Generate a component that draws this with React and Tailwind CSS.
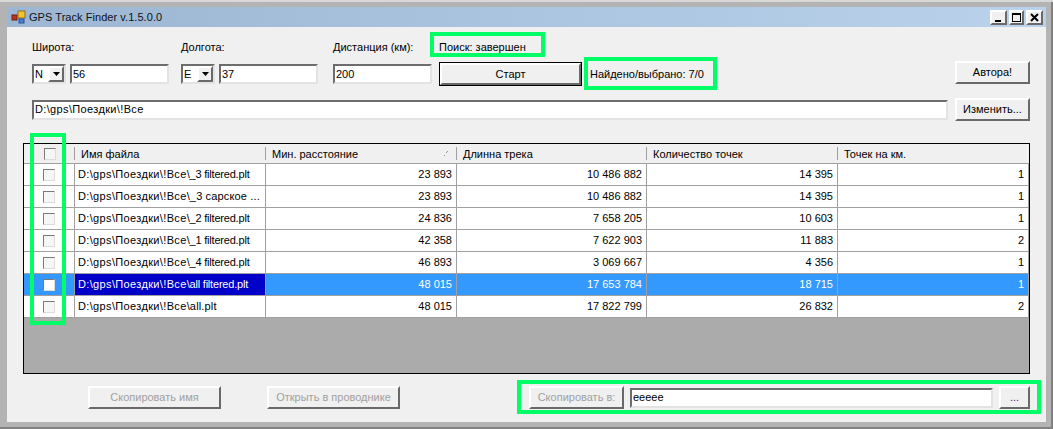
const raised = "border-2 border-t-white border-l-white border-b-[#696969] border-r-[#696969] bg-[#f0f0f0]";
const sunken = "border-2 border-t-[#6d6d6d] border-l-[#6d6d6d] border-b-[#e3e3e3] border-r-[#e3e3e3] bg-white";
const cols = "grid grid-cols-[51px_191px_191px_190px_191px_191px]";

function Field({ className, children }) {
  return <div className={`${sunken} h-[20px] flex items-center pl-[1px] leading-none overflow-hidden ${className}`}>{children}</div>;
}

function Combo({ value }) {
  return (
    <div className={`${sunken} w-[34px] h-[20px] flex items-center justify-between pl-[1px]`}>
      <span>{value}</span>
      <span className={`${raised} w-[16px] h-[16px] flex items-center justify-center`}>
        <svg width="7" height="4" viewBox="0 0 7 4"><path d="M0 0h7L3.5 4z" fill="#000" /></svg>
      </span>
    </div>
  );
}

function Btn({ className, disabled, children }) {
  return (
    <div className={`${raised} h-[23px] flex items-center justify-center ${disabled ? "text-[#a0a0a0]" : "text-black"} ${className}`}>
      {children}
    </div>
  );
}

function Check({ selected }) {
  return (
    <div className={`w-[12px] h-[12px] border border-t-[#7a7a7a] border-l-[#7a7a7a] border-b-[#dcdcdc] border-r-[#dcdcdc] ${selected ? "bg-white" : "bg-[#f6f6f6]"}`} />
  );
}

const base = "D:\\gps\\Поездки\\!Все";
const rows = [
  ["\\_3 filtered.plt", "23 893", "10 486 882", "14 395", "1"],
  ["\\_3 сарское ...", "23 893", "10 486 882", "14 395", "1"],
  ["\\_2 filtered.plt", "24 836", "7 658 205", "10 603", "1"],
  ["\\_1 filtered.plt", "42 358", "7 622 903", "11 883", "2"],
  ["\\_4 filtered.plt", "46 893", "3 069 667", "4 356", "1"],
  ["\\all filtered.plt", "48 015", "17 653 784", "18 715", "1", true],
  ["\\all.plt", "48 015", "17 822 799", "26 832", "2"],
];

const headers = ["Имя файла", "Мин. расстояние", "Длинна трека", "Количество точек", "Точек на км."];

function Row({ r }) {
  const sel = r[5];
  const cell = "border-r border-[#a0a0a0] h-[21px] flex items-center";
  const tail = r[0].includes("filtered") ? "tracking-[-0.2px]" : "tracking-[0.15px]";
  return (
    <div className={`${cols} border-b border-[#a0a0a0] ${sel ? "bg-[#3399ff] text-white" : "bg-white text-black"}`}>
      <div className={`${cell} justify-center`}><Check selected={sel} /></div>
      <div className={`${cell} pl-[3px] whitespace-nowrap overflow-hidden ${sel ? "bg-[#0000c8]" : ""}`}>
        <span className="tracking-[0.35px]">{base}</span><span className={tail}>{r[0]}</span>
      </div>
      {r.slice(1, 5).map((v, i) => (
        <div key={i} className={`${cell} justify-end pr-[4px]`}>{v}</div>
      ))}
    </div>
  );
}

function WinBtn({ className, children }) {
  return <div className={`${raised} h-[15px] flex items-center justify-center ${className}`}>{children}</div>;
}

const green = "absolute border-[4px] border-[#00ff66] pointer-events-none";

export default function App() {
  return (
    <div className="relative w-[1053px] h-[429px] bg-[#d8d8d8] overflow-hidden text-[11px] text-black font-['Liberation_Sans',sans-serif]">
      <div className="absolute inset-x-0 top-[2px] bottom-0 bg-[#b3b3b3] border-b-2 border-r-2 border-[#808080]" />
      <div className="relative mt-[7px] ml-[7px] w-[1039px] h-[415px] flex flex-col bg-[#f0f0f0]">
        {/* Title bar */}
        <div className="h-[20px] flex items-center justify-between pl-[4px] pr-[3px] bg-gradient-to-r from-[#9cb6d3] to-[#bad2eb]">
          <div className="flex items-center gap-[2px]">
            <svg width="16" height="16" viewBox="0 0 16 16">
              <rect x="1" y="6" width="5" height="5" fill="#c03020" stroke="#702010" />
              <rect x="7" y="2" width="7" height="7" fill="#f2c230" stroke="#907020" />
              <rect x="8" y="10" width="5" height="4" fill="#4a80d0" stroke="#2a50a0" />
            </svg>
            <span className="text-[11px] tracking-[0.05px] text-[#111] pt-[1px]">GPS Track Finder v.1.5.0.0</span>
          </div>
          <div className="flex gap-[2px]">
            <WinBtn className="w-[17px]"><svg width="9" height="9" viewBox="0 0 9 9"><rect x="1" y="7" width="6" height="2" fill="#000" /></svg></WinBtn>
            <WinBtn className="w-[15px]"><svg width="9" height="9" viewBox="0 0 9 9"><rect x="0.5" y="0.5" width="8" height="8" fill="none" stroke="#000" /><rect x="0" y="0" width="9" height="2" fill="#000" /></svg></WinBtn>
            <WinBtn className="w-[17px]"><svg width="9" height="9" viewBox="0 0 9 9"><path d="M1 1l7 7M8 1l-7 7" stroke="#000" strokeWidth="2" /></svg></WinBtn>
          </div>
        </div>

        {/* Form rows */}
        <div className="flex flex-col pl-[25px] pr-[16px] pt-[14px]">
          <div className="flex items-start">
            <div className="w-[149px] flex flex-col gap-[10px] pt-0">
              <span className="h-[13px] leading-[13px]">Широта:</span>
              <div className="flex gap-[4px]">
                <Combo value="N" />
                <Field className="w-[99px]">56</Field>
              </div>
            </div>
            <div className="w-[152px] flex flex-col gap-[10px]">
              <span className="h-[13px] leading-[13px]">Долгота:</span>
              <div className="flex gap-[4px]">
                <Combo value="E" />
                <Field className="w-[99px]">37</Field>
              </div>
            </div>
            <div className="w-[106px] flex flex-col gap-[10px]">
              <span className="h-[13px] leading-[13px] whitespace-nowrap">Дистанция (км):</span>
              <Field className="w-[99px]">200</Field>
            </div>
            <div className="w-[151px] flex flex-col gap-[8px]">
              <span className="h-[13px] leading-[13px]">Поиск: завершен</span>
              <div className="w-[143px] h-[24px] border border-black bg-[#f0f0f0]">
                <div className={`${raised} w-full h-full flex items-center justify-center`}>Старт</div>
              </div>
            </div>
            <span className="mt-[25px] w-[365px]">Найдено/выбрано: 7/0</span>
            <Btn className="w-[75px] mt-[20px]">Автора!</Btn>
          </div>
          <div className="flex items-center gap-[7px] mt-[12px]">
            <Field className="w-[916px]"><span className="tracking-[0.35px]">{base}</span></Field>
            <Btn className="w-[75px]">Изменить...</Btn>
          </div>
        </div>

        {/* Table */}
        <div className="mt-[22px] ml-[16px] w-[1007px] h-[231px] border border-black bg-[#ababab] overflow-hidden">
          <div className={`${cols} h-[20px] bg-[#f0f0f0] border-b border-[#a0a0a0]`}>
            <div className="flex items-center justify-center relative"><Check /><span className="absolute right-0 top-[3px] bottom-[3px] w-px bg-[#a0a0a0]" /></div>
            {headers.map((h, i) => (
              <div key={h} className="relative flex items-center pl-[6px] pt-[2px]">
                {h}
                {i === 1 && (
                  <svg className="absolute right-[9px] top-[7px]" width="4" height="5" viewBox="0 0 4 5"><path d="M0 5L1 4M2 2L4 0" stroke="#999" /></svg>
                )}
                {i < 4 && <span className="absolute right-0 top-[3px] bottom-[3px] w-px bg-[#a0a0a0]" />}
              </div>
            ))}
          </div>
          {rows.map((r, i) => <Row key={i} r={r} />)}
        </div>

        {/* Bottom */}
        <div className="flex items-center mt-[12px] pl-[81px]">
          <Btn disabled className="w-[133px]">Скопировать имя</Btn>
          <Btn disabled className="w-[133px] ml-[46px]">Открыть в проводнике</Btn>
          <Btn disabled className="w-[95px] ml-[129px]">Скопировать в:</Btn>
          <Field className="w-[363px] ml-[6px]">eeeee</Field>
          <Btn className="w-[31px] ml-[6px]"><span className="text-[#600080]">...</span></Btn>
        </div>
      </div>

      {/* Annotations */}
      <div className={`${green} left-[430px] top-[32px] w-[115px] h-[25px]`} />
      <div className={`${green} left-[584px] top-[57px] w-[133px] h-[33px]`} />
      <div className={`${green} left-[30px] top-[133px] w-[36px] h-[192px]`} />
      <div className={`${green} left-[517px] top-[380px] w-[524px] h-[34px]`} />
    </div>
  );
}
